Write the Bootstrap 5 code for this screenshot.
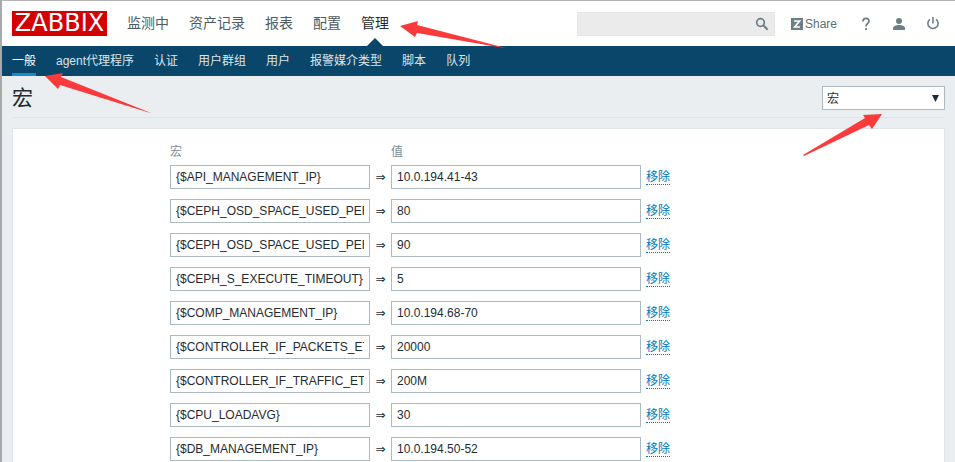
<!DOCTYPE html>
<html lang="zh-CN">
<head>
<meta charset="utf-8">
<meta name="viewport" content="width=device-width, initial-scale=1">
<title>宏</title>
<link href="https://cdn.jsdelivr.net/npm/bootstrap@5.3.0/dist/css/bootstrap.min.css" rel="stylesheet">
<style>
body{font:12px/18px "Liberation Sans","Noto Sans CJK SC",sans-serif;color:#1f2c33;background:#ebeef0;border-left:2px solid #a9a9ab;border-top:1px solid #b4b4b4}
a{text-decoration:none}
.top-bar{height:45px;padding:0 16px 0 10px;background:#fff}
.brand{width:95px;height:25px;background:#d40000;color:#fff;font:24px/25px "DejaVu Sans",sans-serif}
.brand:hover{color:#fff}
.main-menu{gap:20px;margin-left:20px;font-size:14px;line-height:45px}
.main-menu a{display:block;color:#4f5b62}
.main-menu a.active{position:relative;color:#1f2c33}
.main-menu a.active::after{content:"";position:absolute;left:50%;bottom:0;margin-left:-8px;border:8px solid transparent;border-top:0;border-bottom-color:#0a466a}
.search-box{width:198px;height:24px;background:#ebebeb;border:1px solid #e3e5e7}
.search-box input{min-width:0;background:none;border:0;outline:0}
.search-box button{width:24px;line-height:0}
.icon-btn{color:#6c7f89;line-height:0}
.share{color:#5f6e76;gap:2px;margin:0 24px 0 16px}
.tools{gap:22px}
.sub-bar{height:30px;padding:0 10px;background:#0a466a}
.sub-menu{gap:20px}
.sub-menu a{display:block;height:30px;line-height:31px;color:#dbe5ea}
.sub-menu a.active{color:#fff;border-bottom:3px solid #1a87cf}
main{padding:0 10px}
.title-row{height:42px;padding-top:2px;border-bottom:1px solid #dfe4e7}
h1{font-size:21px;line-height:30px;font-weight:400}
.page-select{width:123px;height:24px}
.page-select select{appearance:none;border:1px solid #acbbc2;border-radius:0;background:#fff;color:#1f2c33;padding:3px 4px 0;outline:0}
.select-arrow{position:absolute;right:6px;top:9px;pointer-events:none}
.panel{margin-top:10px;padding:14px 12px 0 157px;background:#fff;border:1px solid #dfe4e7;border-bottom:0;min-height:334px}
.macros th{font-weight:400;color:#768d99;line-height:18px;padding:0}
.macros td{padding:4px 0 6px;line-height:24px}
.macros td:last-child{padding-left:5px}
.macros tr:last-child td{padding-bottom:0}
.macros input{display:block;height:24px;border:1px solid #acbbc2;padding:0 5px;color:#1f2c33;outline:0}
.macro-name{width:200px}
.macro-value{width:250px}
.macros .to{width:21px;font-family:"DejaVu Sans",sans-serif}
.remove{background:none;border:0;border-bottom:1px dotted #0275b8;padding:0;color:#0275b8;line-height:14px}
.pointer{position:absolute;z-index:5;fill:#fb3b3b;pointer-events:none}
.p-menu{left:100%;top:19px;margin-left:11px}
.p-sub{left:100%;top:27px;margin-left:8px}
.p-select{right:62px;top:27px}
</style>
<script src="https://cdn.jsdelivr.net/npm/bootstrap@5.3.0/dist/js/bootstrap.bundle.min.js"></script>
</head>
<body>
<header>
<div class="top-bar d-flex align-items-center">
<a class="brand text-center" href="#">ZABBIX</a>
<nav class="main-menu d-flex" aria-label="主菜单">
<a href="#">监测中</a><a href="#">资产记录</a><a href="#">报表</a><a href="#">配置</a>
<a class="active" href="#" aria-current="page">管理<svg class="pointer p-menu" width="108" height="30" aria-hidden="true"><path d="M0 6 18 1 17 5 106 28 98 27 17 13 15 17Z"/></svg></a>
</nav>
<form class="search-box d-flex align-items-center ms-auto" role="search">
<input class="flex-grow-1" type="text" aria-label="搜索">
<button class="btn p-0 border-0 icon-btn" type="button" aria-label="搜索"><svg width="14" height="14" fill="none" stroke="currentColor"><circle cx="5.5" cy="5.5" r="3.8" stroke-width="1.7"/><path d="m8.3 8.3 4.4 4.4" stroke-width="2"/></svg></button>
</form>
<a class="share d-flex align-items-center" href="#"><svg width="12" height="12" aria-hidden="true"><path fill="#6c7f89" d="M0 0h12v12H0z"/><path d="M3 3h5.500L3.700 9H9" fill="none" stroke="#fff" stroke-width="1.700"/></svg>Share</a>
<div class="tools d-flex align-items-center">
<a class="icon-btn" href="#" aria-label="帮助"><svg width="10" height="14" fill="none" stroke="currentColor" stroke-width="1.8"><path d="M2 4.4C2 .4 8 .4 8 4.1 8 6.500 5 6.400 5 9.400M5 11v2"/></svg></a>
<a class="icon-btn" href="#" aria-label="用户资料"><svg width="12" height="12" fill="currentColor"><circle cx="6" cy="3" r="3"/><path d="M0 12v-2c0-1.800 3.500-3 6-3s6 1.200 6 3v2z"/></svg></a>
<a class="icon-btn" href="#" aria-label="退出"><svg width="12" height="13" fill="none" stroke="currentColor" stroke-width="1.600"><path d="M6 0v6.500M3 2.300a5.100 5.100 0 1 0 6 0"/></svg></a>
</div>
</div>
<div class="sub-bar">
<nav class="sub-menu d-flex" aria-label="子菜单">
<div class="position-relative"><a class="active" href="#" aria-current="page">一般</a><svg class="pointer p-sub" width="110" height="42" aria-hidden="true"><path d="M1 3 19 0 17 4 107 40 103 39 16 12 14 16Z"/></svg></div>
<a href="#">agent代理程序</a><a href="#">认证</a><a href="#">用户群组</a><a href="#">用户</a><a href="#">报警媒介类型</a><a href="#">脚本</a><a href="#">队列</a>
</nav>
</div>
</header>
<main>
<div class="title-row d-flex align-items-center justify-content-between">
<h1 class="m-0">宏</h1>
<div class="page-select position-relative">
<select class="w-100 h-100 d-block" aria-label="配置项"><option>宏</option></select>
<svg class="select-arrow" width="7" height="7" aria-hidden="true"><path d="M0 0h7L3.500 7z" fill="#1f2c33"/></svg>
<svg class="pointer p-select" width="80" height="44" aria-hidden="true"><path d="M79 1 60 2 62 5 0 42 1 43 66 12 69 16Z"/></svg>
</div>
</div>
<form class="panel">
<table class="macros">
<thead><tr><th scope="col">宏</th><th></th><th scope="col">值</th><th></th></tr></thead>
<tbody>
<tr><td><input class="macro-name" type="text" aria-label="宏" value="{$API_MANAGEMENT_IP}"></td><td class="to text-center">⇒</td><td><input class="macro-value" type="text" aria-label="值" value="10.0.194.41-43"></td><td><button class="remove" type="button">移除</button></td></tr>
<tr><td><input class="macro-name" type="text" aria-label="宏" value="{$CEPH_OSD_SPACE_USED_PERCENT}"></td><td class="to text-center">⇒</td><td><input class="macro-value" type="text" aria-label="值" value="80"></td><td><button class="remove" type="button">移除</button></td></tr>
<tr><td><input class="macro-name" type="text" aria-label="宏" value="{$CEPH_OSD_SPACE_USED_PERCENT}"></td><td class="to text-center">⇒</td><td><input class="macro-value" type="text" aria-label="值" value="90"></td><td><button class="remove" type="button">移除</button></td></tr>
<tr><td><input class="macro-name" type="text" aria-label="宏" value="{$CEPH_S_EXECUTE_TIMEOUT}"></td><td class="to text-center">⇒</td><td><input class="macro-value" type="text" aria-label="值" value="5"></td><td><button class="remove" type="button">移除</button></td></tr>
<tr><td><input class="macro-name" type="text" aria-label="宏" value="{$COMP_MANAGEMENT_IP}"></td><td class="to text-center">⇒</td><td><input class="macro-value" type="text" aria-label="值" value="10.0.194.68-70"></td><td><button class="remove" type="button">移除</button></td></tr>
<tr><td><input class="macro-name" type="text" aria-label="宏" value="{$CONTROLLER_IF_PACKETS_ETH}"></td><td class="to text-center">⇒</td><td><input class="macro-value" type="text" aria-label="值" value="20000"></td><td><button class="remove" type="button">移除</button></td></tr>
<tr><td><input class="macro-name" type="text" aria-label="宏" value="{$CONTROLLER_IF_TRAFFIC_ETH}"></td><td class="to text-center">⇒</td><td><input class="macro-value" type="text" aria-label="值" value="200M"></td><td><button class="remove" type="button">移除</button></td></tr>
<tr><td><input class="macro-name" type="text" aria-label="宏" value="{$CPU_LOADAVG}"></td><td class="to text-center">⇒</td><td><input class="macro-value" type="text" aria-label="值" value="30"></td><td><button class="remove" type="button">移除</button></td></tr>
<tr><td><input class="macro-name" type="text" aria-label="宏" value="{$DB_MANAGEMENT_IP}"></td><td class="to text-center">⇒</td><td><input class="macro-value" type="text" aria-label="值" value="10.0.194.50-52"></td><td><button class="remove" type="button">移除</button></td></tr>
</tbody>
</table>
</form>
</main>
</body>
</html>
